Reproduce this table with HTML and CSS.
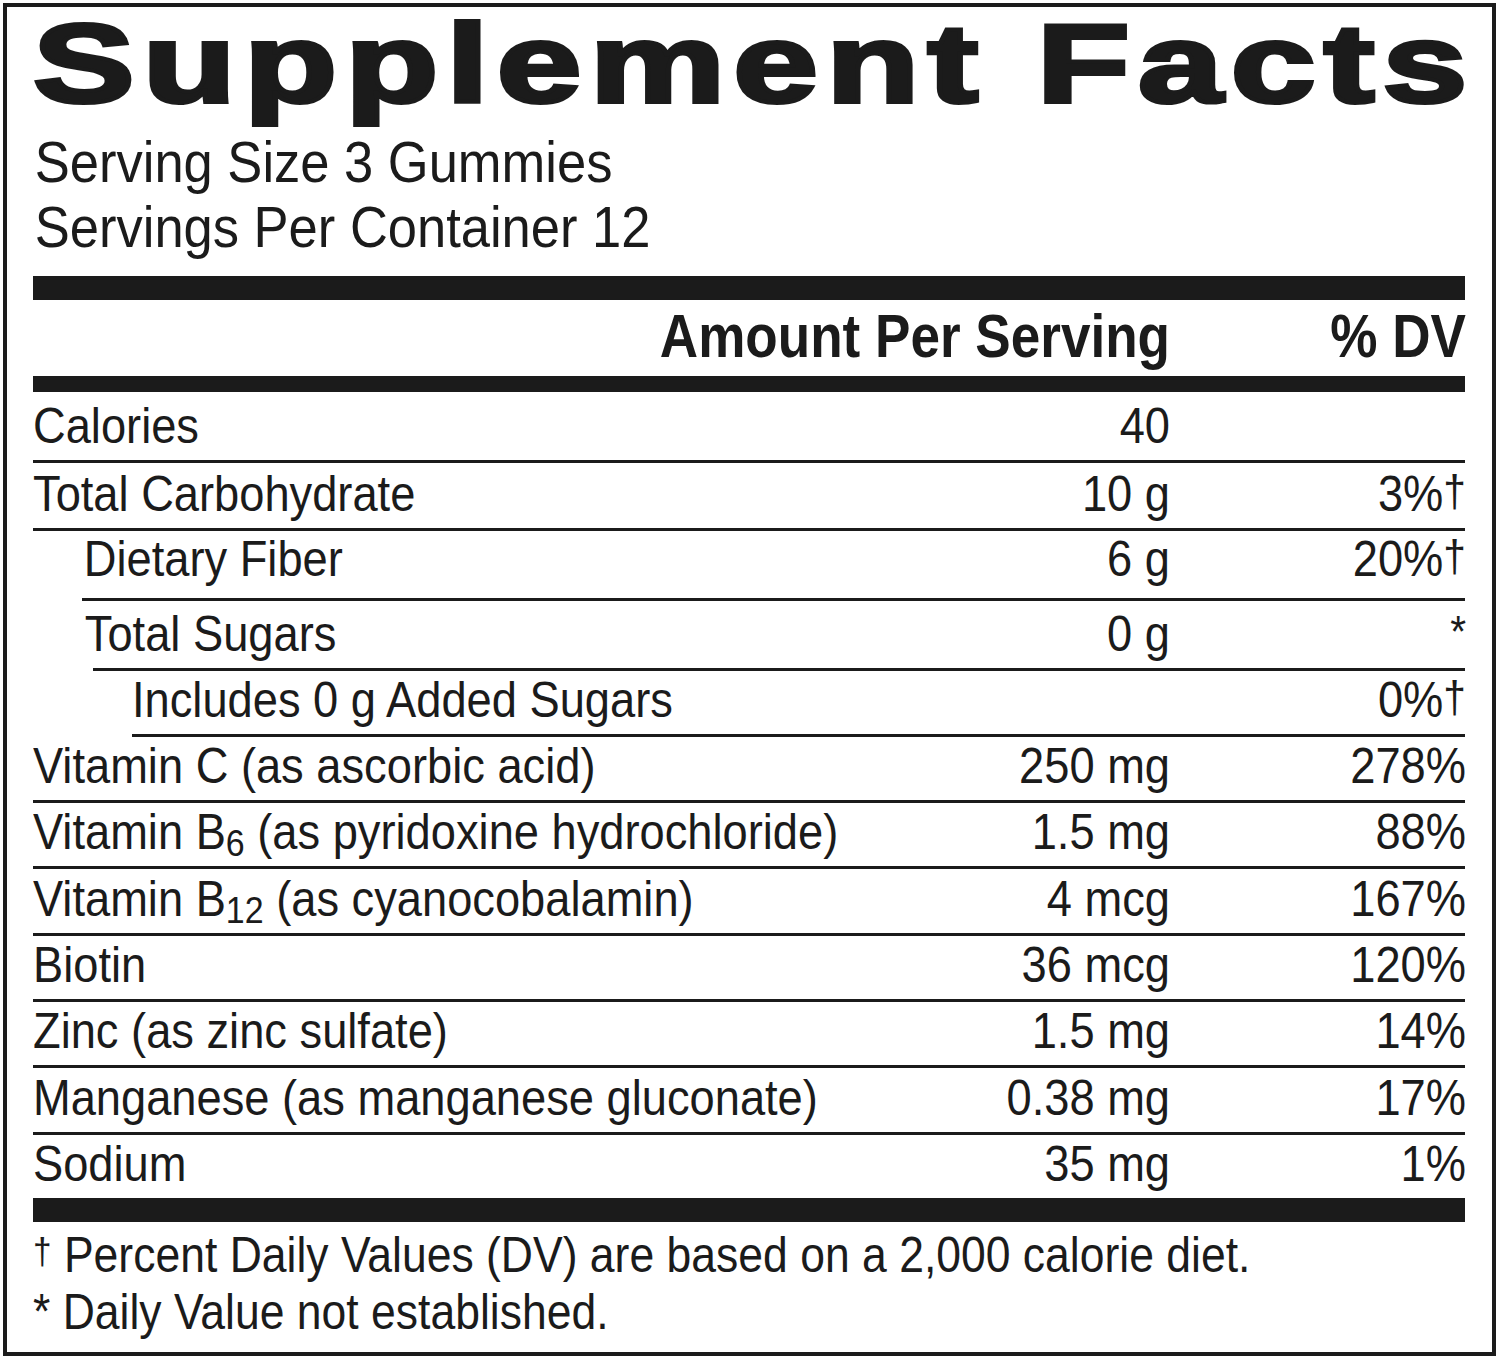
FILE: index.html
```html
<!DOCTYPE html>
<html>
<head>
<meta charset="UTF-8">
<meta name="viewport" content="width=device-width, initial-scale=1.0">
<title>Supplement Facts</title>
<link rel="stylesheet" href="styles.css">
</head>
<body>

    <div class="label">
        <h1 class="title">Supplement Facts</h1>
        <p class="serving">Serving Size 3 Gummies</p>
        <p class="serving">Servings Per Container 12</p>

        <div class="bar thick"></div>
        <div class="row head">
            <span></span>
            <span class="amt">Amount Per Serving</span>
            <span class="dv">% DV</span>
        </div>
        <div class="bar medium"></div>

        <div class="row first">
            <span class="name">Calories</span>
            <span class="amt">40</span>
            <span class="dv"></span>
        </div>
        <div class="row h68">
            <span class="name">Total Carbohydrate</span>
            <span class="amt">10 g</span>
            <span class="dv">3%<span class="dag">&dagger;</span></span>
        </div>
        <div class="row h70 sub lift">
            <span class="name">Dietary Fiber</span>
            <span class="amt">6 g</span>
            <span class="dv">20%<span class="dag">&dagger;</span></span>
        </div>
        <div class="row h70 sub wide">
            <span class="name">Total Sugars</span>
            <span class="amt">0 g</span>
            <span class="dv"><span class="star">*</span></span>
        </div>
        <div class="row subsub">
            <span class="name">Includes 0 g Added Sugars</span>
            <span class="amt"></span>
            <span class="dv">0%<span class="dag">&dagger;</span></span>
        </div>
        <div class="row">
            <span class="name">Vitamin C (as ascorbic acid)</span>
            <span class="amt">250 mg</span>
            <span class="dv">278%</span>
        </div>
        <div class="row">
            <span class="name">Vitamin B<sub>6</sub> (as pyridoxine hydrochloride)</span>
            <span class="amt">1.5 mg</span>
            <span class="dv">88%</span>
        </div>
        <div class="row h67">
            <span class="name">Vitamin B<sub>12</sub> (as cyanocobalamin)</span>
            <span class="amt">4 mcg</span>
            <span class="dv">167%</span>
        </div>
        <div class="row">
            <span class="name">Biotin</span>
            <span class="amt">36 mcg</span>
            <span class="dv">120%</span>
        </div>
        <div class="row">
            <span class="name">Zinc (as zinc sulfate)</span>
            <span class="amt">1.5 mg</span>
            <span class="dv">14%</span>
        </div>
        <div class="row h67">
            <span class="name">Manganese (as manganese gluconate)</span>
            <span class="amt">0.38 mg</span>
            <span class="dv">17%</span>
        </div>
        <div class="row last">
            <span class="name">Sodium</span>
            <span class="amt">35 mg</span>
            <span class="dv">1%</span>
        </div>

        <div class="bar thick"></div>
        <p class="note"><span class="dag">&dagger;</span> Percent Daily Values (DV) are based on a 2,000 calorie diet.</p>
        <p class="note">* Daily Value not established.</p>
    </div>

</body>
</html>
```

FILE: styles.css
```css
    :root {
        --ink: #1b1b1b;
        --squeeze: scaleX(.905);
    }
    body {
        margin: 0;
        background: white;
        color: var(--ink);
        font-family: "Liberation Sans", Arial, sans-serif;
    }
    .label {
        box-sizing: border-box;
        width: 1493px;
        height: 1353px;
        margin: 3px 0 0 3px;
        padding: 0 27px 0 26px;
        border: 4px solid var(--ink);
    }
    .title {
        width: max-content;
        margin: 0;
        font-weight: bold;
        font-size: 112px;
        line-height: 114px;
        letter-spacing: 6px;
        white-space: nowrap;
        -webkit-text-stroke: 4px var(--ink);
        transform: scaleX(1.36);
        transform-origin: left;
    }
    .serving {
        margin: 0;
        font-size: 58px;
        line-height: 65px;
        padding-left: 2px;
        white-space: nowrap;
        transform: var(--squeeze);
        transform-origin: left;
    }
    .serving:first-of-type {
        margin-top: 8px;
    }
    .bar {
        background: var(--ink);
    }
    .thick {
        height: 24px;
    }
    .serving + .bar {
        margin-top: 17px;
    }
    .medium {
        height: 16px;
    }
    .row {
        box-sizing: border-box;
        height: 66px;
        display: grid;
        grid-template-columns: minmax(0, 1fr) 600px 297px;
        align-items: end;
        font-size: 50px;
        line-height: 50px;
        padding-bottom: 9px;
        border-bottom: 3px solid var(--ink);
        white-space: nowrap;
    }
    .row > span {
        transform: var(--squeeze);
    }
    .row .name {
        transform-origin: left;
    }
    .row .amt,
    .row .dv {
        text-align: right;
        transform-origin: right;
    }
    .row .amt {
        margin-right: -2px;
    }
    .row .dv {
        margin-right: -1px;
    }
    .row.head {
        height: 76px;
        font-weight: bold;
        font-size: 61px;
        line-height: 72px;
        padding-bottom: 4px;
        border-bottom: none;
    }
    .row.head > span {
        transform: scaleX(.87);
    }
    .row.first {
        height: 71px;
    }
    .row.h67 {
        height: 67px;
    }
    .row.h68 {
        height: 68px;
    }
    .row.h70 {
        height: 70px;
    }
    .row.lift {
        padding-bottom: 14px;
    }
    .row.sub {
        margin-left: 49px;
    }
    .row.sub .name {
        padding-left: 2px;
    }
    .row.sub.wide {
        margin-left: 60px;
    }
    .row.sub.wide .name {
        margin-left: -10px;
    }
    .row.subsub {
        margin-left: 99px;
    }
    .row.last {
        height: 63px;
        border-bottom: none;
    }
    sub {
        font-size: 0.75em;
        vertical-align: -0.18em;
        line-height: 0;
    }
    .dag {
        font-size: 0.9em;
        vertical-align: 0.12em;
        line-height: 0;
        font-weight: 300;
    }
    .star {
        display: inline-block;
        font-size: 0.9em;
        line-height: 0;
        vertical-align: 0.08em;
    }
    .note {
        margin: 0;
        font-size: 50px;
        line-height: 57px;
        white-space: nowrap;
        transform: scaleX(.89);
        transform-origin: left;
    }
    .bar + .note {
        margin-top: 5px;
    }
    .note .dag {
        font-size: 0.75em;
        vertical-align: 0.22em;
    }
```
